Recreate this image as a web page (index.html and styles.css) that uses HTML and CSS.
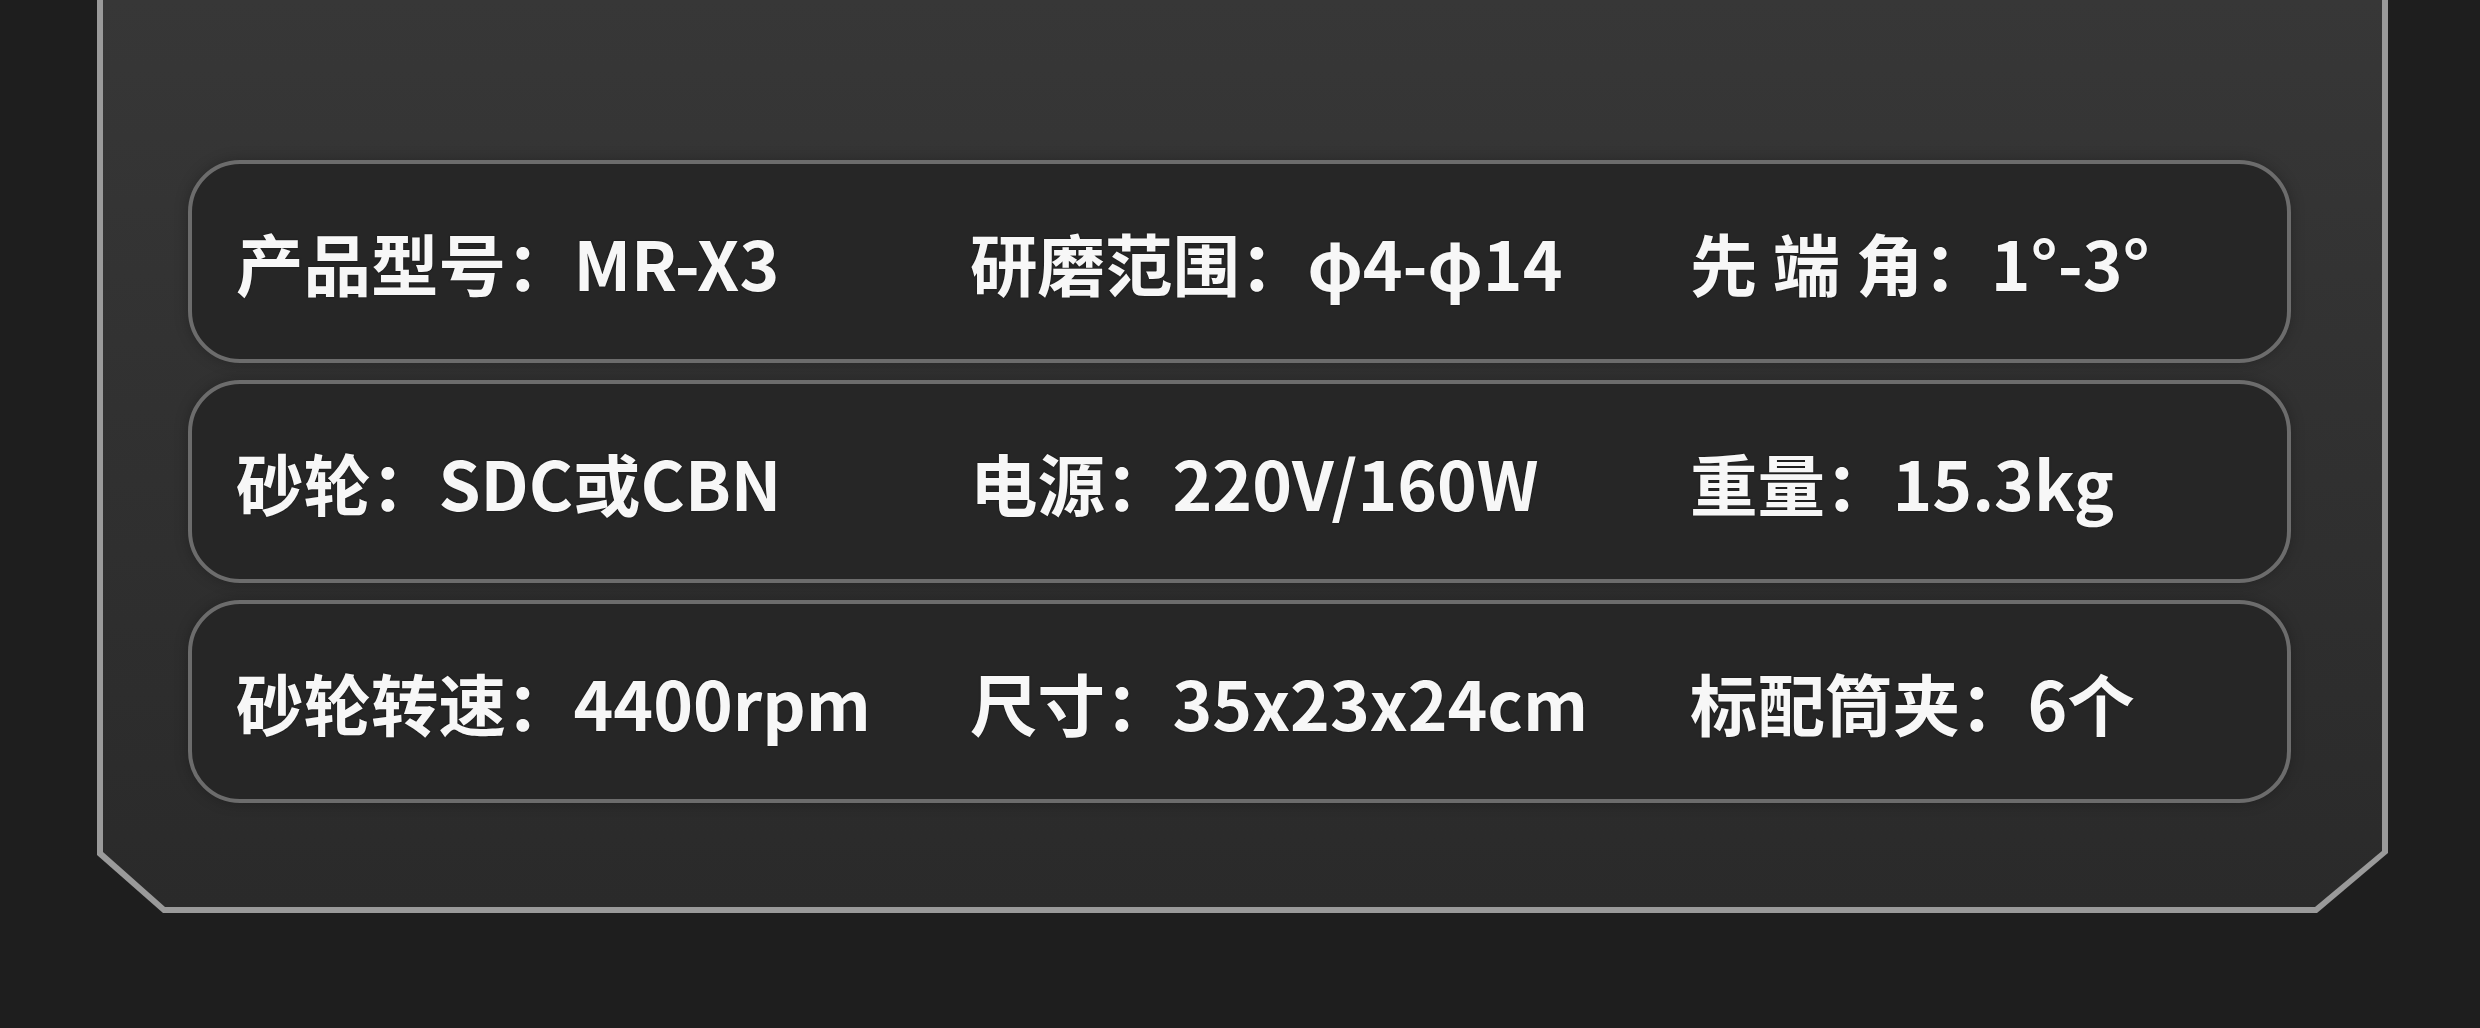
FILE: index.html
```html
<!DOCTYPE html>
<html lang="zh-CN">
<head>
<meta charset="utf-8">
<title>产品参数</title>
<link rel="stylesheet" href="styles.css">
</head>
<body>
<div class="page">
  <div class="panel">
    <div class="panel-inner">
      <div class="spec-row">
        <div class="spec">产品型号：MR-X3</div>
        <div class="spec">研磨范围：φ4-φ14</div>
        <div class="spec">先 端 角：1°-3°</div>
      </div>
      <div class="spec-row">
        <div class="spec">砂轮：SDC或CBN</div>
        <div class="spec">电源：220V/160W</div>
        <div class="spec">重量：15.3kg</div>
      </div>
      <div class="spec-row">
        <div class="spec">砂轮转速：4400rpm</div>
        <div class="spec">尺寸：35x23x24cm</div>
        <div class="spec">标配筒夹：6个</div>
      </div>
    </div>
  </div>
</div>
</body>
</html>
```

FILE: styles.css
```css
html, body {
  margin: 0;
  padding: 0;
}

body {
  width: 2480px;
  height: 1028px;
  overflow: hidden;
  background: #1e1e1e;
  font-family: "Noto Sans CJK SC", "Noto Sans", sans-serif;
}

.page {
  padding-left: 97px;
}

.panel {
  width: 2291px;
  height: 913px;
  box-sizing: border-box;
  padding: 0 6px 6px 6px;
  background: #9a9a9a;
  clip-path: polygon(0 0, 100% 0, 100% calc(100% - 60px), calc(100% - 71px) 100%, 66px 100%, 0 calc(100% - 58px));
}

.panel-inner {
  height: 100%;
  box-sizing: border-box;
  padding: 160px 91px 0 85px;
  background: linear-gradient(180deg, #373737 0%, #313131 45%, #2a2a2a 100%);
  clip-path: polygon(0 0, 100% 0, 100% calc(100% - 56px), calc(100% - 67px) 100%, 62px 100%, 0 calc(100% - 55px));
  display: flex;
  flex-direction: column;
  gap: 17px;
}

.spec-row {
  height: 203px;
  box-sizing: border-box;
  border: 4px solid #6c6c6c;
  border-radius: 52px;
  background: #262626;
  box-shadow: 0 0 14px rgba(0, 0, 0, 0.25);
  padding-left: 44px;
  display: grid;
  grid-template-columns: 734px 720px 1fr;
  align-items: center;
}

.spec {
  color: #f7f7f7;
  font-size: 67.5px;
  font-weight: 700;
  line-height: 1;
  white-space: pre;
  text-shadow: 0 0 2px rgba(0, 0, 0, 0.6);
}
```
